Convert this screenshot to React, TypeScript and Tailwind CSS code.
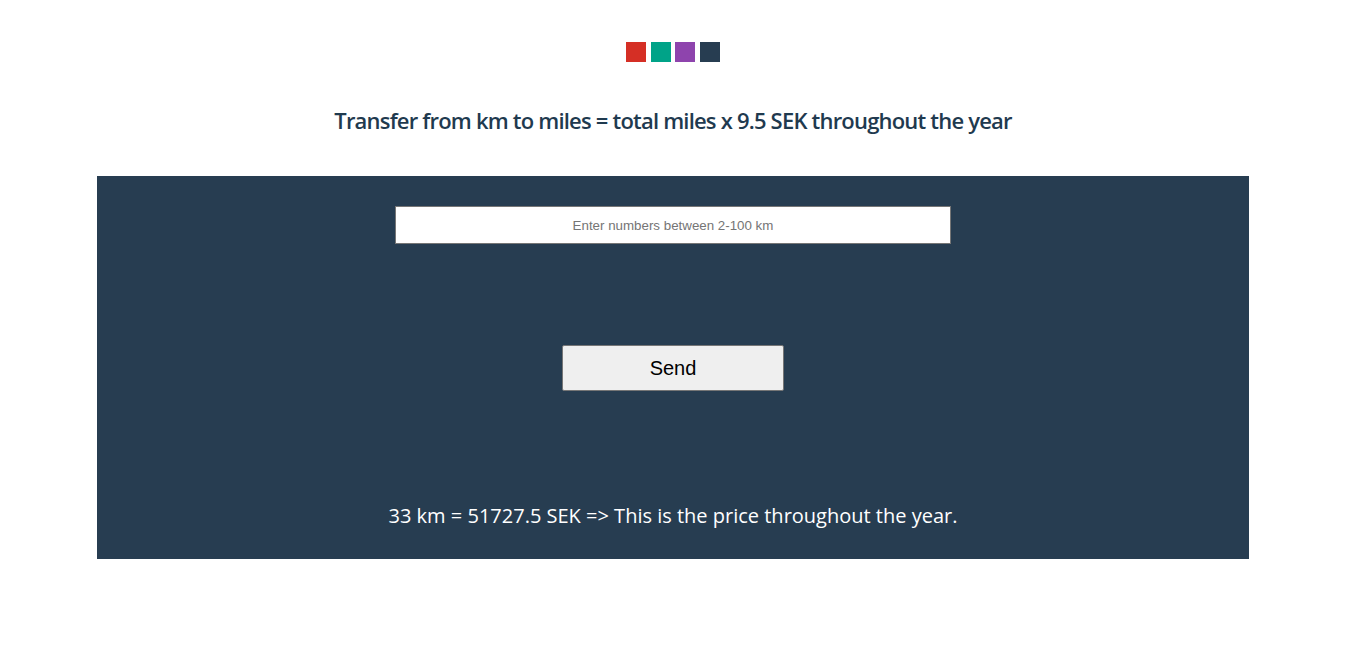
import { useState } from "react";

const squares = ["bg-[#d52f25]", "bg-[#00a388]", "bg-[#8e44ad]", "bg-[#273d51]"];

export default function App() {
  const [km, setKm] = useState("");

  return (
    <div className="w-[1346px] bg-white font-['Open_Sans',sans-serif]">
      <div className="flex justify-center gap-[4.6px] pt-[42px]">
        {squares.map((c) => (
          <span key={c} className={`block h-[20px] w-[20px] ${c}`} />
        ))}
      </div>

      <h1 className="mt-[43px] text-center text-[22px] font-semibold leading-[30px] tracking-[-0.8px] text-[#1f3a4f]">
        Transfer from km to miles = total miles x 9.5 SEK throughout the year
      </h1>

      {/* converter panel */}
      <div className="mx-auto mt-[41px] flex h-[383px] w-[1152px] flex-col items-center bg-[#273d51] pt-[30px]">
        <input
          value={km}
          onChange={(e) => setKm(e.target.value)}
          placeholder="Enter numbers between 2-100 km"
          className="h-[38px] w-[556px] border border-[#767676] bg-white text-center font-['Liberation_Sans',Arial,sans-serif] text-[13.33px] text-black placeholder:text-[#757575] outline-none"
        />
        <button
          type="button"
          className="mt-[101px] h-[46px] w-[222px] rounded-[2px] border border-[#767676] bg-[#efefef] font-['Liberation_Sans',Arial,sans-serif] text-[20px] text-black"
        >
          Send
        </button>
        <p className="mt-[111px] text-[20px] leading-[27px] text-white">
          33 km = 51727.5 SEK =&gt; This is the price throughout the year.
        </p>
      </div>
      <div className="h-[111px]" />
    </div>
  );
}
